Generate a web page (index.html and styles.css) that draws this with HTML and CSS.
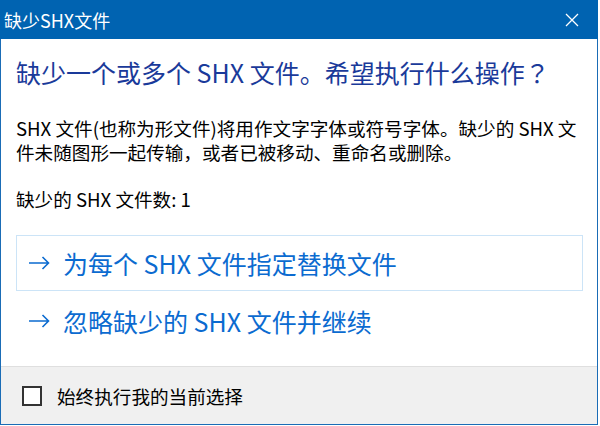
FILE: index.html
```html
<!DOCTYPE html>
<html lang="zh-CN">
<head>
  <meta charset="UTF-8" />
  <meta name="viewport" content="width=device-width, initial-scale=1.0" />
  <title>缺少SHX文件</title>
  <link rel="stylesheet" href="styles.css">
</head>
<body>
  <div class="window">
    <div class="titlebar">
      <span class="title">缺少SHX文件</span>
      <button class="close" aria-label="关闭">
        <svg width="14" height="14" viewBox="0 0 14 14">
          <path d="M1 1 L13 13 M13 1 L1 13" stroke="#fff" stroke-width="1.3" fill="none" />
        </svg>
      </button>
    </div>

    <div class="content">
      <h1>缺少一个或多个 SHX 文件。希望执行什么操作<span class="punct" lang="ja">？</span></h1>
      <p class="desc">SHX 文件(也称为形文件)将用作文字字体或符号字体。缺少的 SHX 文件未随图形一起传输，或者已被移动、重命名或删除。</p>
      <p class="count">缺少的 SHX 文件数: 1</p>

      <div class="choices">
        <button class="choice active">
          <svg class="arrow" width="22" height="14" viewBox="0 0 22 14">
            <path d="M1 7 H20.5 M14.5 1 L20.5 7 L14.5 13" stroke="currentColor" stroke-width="1.6" fill="none" />
          </svg>
          <span>为每个 SHX 文件指定替换文件</span>
        </button>
        <button class="choice">
          <svg class="arrow" width="22" height="14" viewBox="0 0 22 14">
            <path d="M1 7 H20.5 M14.5 1 L20.5 7 L14.5 13" stroke="currentColor" stroke-width="1.6" fill="none" />
          </svg>
          <span>忽略缺少的 SHX 文件并继续</span>
        </button>
      </div>
    </div>

    <div class="footer">
      <label class="remember">
        <span class="box"></span>
        <span>始终执行我的当前选择</span>
      </label>
    </div>
  </div>
</body>
</html>
```

FILE: styles.css
```css
body {
  margin: 0;
  background: #fff;
  font-family: "Noto Sans CJK SC", "Noto Sans", sans-serif;
}

.window {
  width: 596px;
  height: 424px;
  border: 1px solid #1a6cb6;
  border-top: none;
  display: flex;
  flex-direction: column;
  background: #fff;
}

.titlebar {
  height: 39px;
  background: #0063b1;
  display: flex;
  align-items: center;
  justify-content: space-between;
  padding-left: 4px;
  margin: 0 -1px;
}

.title {
  color: #fff;
  font-size: 18px;
  line-height: 24px;
}

.close {
  width: 46px;
  height: 39px;
  border: none;
  background: transparent;
  display: flex;
  align-items: center;
  justify-content: center;
  padding: 0;
  margin-right: 3px;
}

.content {
  flex: 1;
  padding: 0 14px 0 15px;
}

/* 问号居中放在全角格里 */
.punct {
  font-family: "Noto Sans CJK JP", "Noto Sans CJK SC", sans-serif;
}

h1 {
  margin: 17px 0 0;
  font-size: 25px;
  line-height: 32px;
  font-weight: normal;
  color: #1a3a9a;
}

.desc {
  margin: 28px 0 0;
  font-size: 18.6px;
  line-height: 24px;
  color: #000;
}

.count {
  margin: 23px 0 0;
  font-size: 18.6px;
  line-height: 24px;
  color: #000;
}

.choices {
  margin-top: 24px;
  display: flex;
  flex-direction: column;
  gap: 2px;
}

.choice {
  height: 56px;
  border: 1px solid transparent;
  background: transparent;
  display: flex;
  align-items: center;
  gap: 13px;
  padding: 0 11px;
  font-family: inherit;
  font-size: 25px;
  line-height: 32px;
  color: #0b6bd0;
  text-align: left;
}

.choice.active {
  border-color: #cce4f7;
}

.arrow {
  flex: none;
}

.footer {
  height: 57px;
  border-top: 1px solid #dfdfdf;
  background: #f0f0f0;
  display: flex;
  align-items: center;
  padding-left: 21px;
}

.remember {
  display: flex;
  align-items: center;
  gap: 15px;
  font-size: 18.6px;
  line-height: 24px;
  color: #000;
}

.box {
  width: 16px;
  height: 16px;
  border: 2px solid #333;
  background: #fff;
}
```
